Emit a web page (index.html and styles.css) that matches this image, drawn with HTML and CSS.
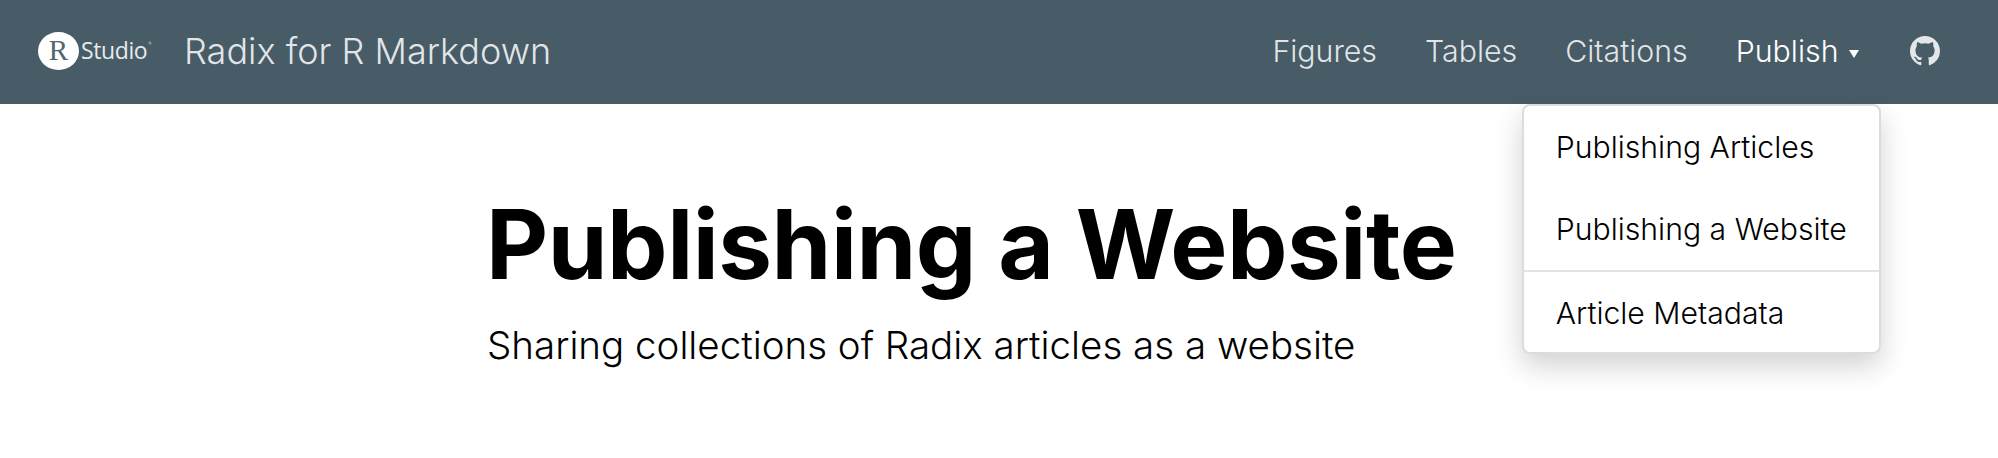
FILE: index.html
```html
<!DOCTYPE html>
<html>
<head>
  <meta charset="utf-8">
  <meta name="viewport" content="width=device-width">
  <title>Publishing a Website</title>
  <link rel="stylesheet" href="styles.css">
</head>
<body>
  <div class="navbar">
    <a class="logo" href="#">
      <svg width="116" height="44" viewBox="0 0 116 44">
        <ellipse cx="20.5" cy="22" rx="20.5" ry="19" fill="#fff"/>
        <text class="logo-r" x="20.5" y="31" text-anchor="middle">R</text>
        <text class="logo-studio" x="43" y="30">Studio</text>
        <circle cx="112" cy="14" r="1.2" fill="none" stroke="#cfd6da" stroke-width="0.5"/>
      </svg>
    </a>
    <a class="brand" href="#">Radix for R Markdown</a>
    <div class="nav-links">
      <a class="nav-link" href="#">Figures</a>
      <a class="nav-link" href="#">Tables</a>
      <a class="nav-link" href="#">Citations</a>
      <div class="nav-menu">
        <a class="nav-link active" href="#">Publish <span class="caret"></span></a>
        <div class="dropdown">
          <a class="dropdown-item" href="#">Publishing Articles</a>
          <a class="dropdown-item" href="#">Publishing a Website</a>
          <div class="divider"></div>
          <a class="dropdown-item" href="#">Article Metadata</a>
        </div>
      </div>
      <a class="nav-link github" href="#">
        <svg width="30" height="30" viewBox="0 0 16 16"><path fill="currentColor" d="M8 0C3.58 0 0 3.58 0 8c0 3.54 2.29 6.53 5.47 7.59.4.07.55-.17.55-.38 0-.19-.01-.82-.01-1.49-2.01.37-2.53-.49-2.69-.94-.09-.23-.48-.94-.82-1.13-.28-.15-.68-.52-.01-.53.63-.01 1.08.58 1.23.82.72 1.21 1.87.87 2.33.66.07-.52.28-.87.51-1.07-1.78-.2-3.64-.89-3.64-3.95 0-.87.31-1.59.82-2.15-.08-.2-.36-1.02.08-2.12 0 0 .67-.21 2.2.82.64-.18 1.32-.27 2-.27.68 0 1.36.09 2 .27 1.53-1.04 2.2-.82 2.2-.82.44 1.1.16 1.92.08 2.12.51.56.82 1.27.82 2.15 0 3.07-1.87 3.75-3.65 3.95.29.25.54.73.54 1.48 0 1.07-.01 1.93-.01 2.2 0 .21.15.46.55.38A8.013 8.013 0 0016 8c0-4.42-3.58-8-8-8z"/></svg>
      </a>
    </div>
  </div>
  <div class="header">
    <h1 class="title">Publishing a Website</h1>
    <p class="subtitle">Sharing collections of Radix articles as a website</p>
  </div>
</body>
</html>
```

FILE: styles.css
```css
*{
  padding: 0;
  margin: 0;
  box-sizing: border-box;
}
html, body{
  height: 100%;
  overflow: hidden;
}
body{
  font-family: Inter, "Liberation Sans", sans-serif;
  background-color: #fff;
  color: #000;
}
a{
  text-decoration: none;
  color: inherit;
}
.navbar{
  display: flex;
  align-items: center;
  height: 104px;
  padding: 0 38px 2px;
  background-color: #485c68;
  color: rgba(255,255,255,0.85);
}
.logo{
  display: flex;
  margin-right: 30px;
}
.logo-r{
  font-family: "Liberation Serif", serif;
  font-size: 29px;
  fill: #54666f;
}
.logo-studio{
  font-family: "Open Sans", sans-serif;
  font-size: 23px;
  fill: #e6eaec;
  letter-spacing: -0.4px;
}
.brand{
  font-size: 36px;
  font-weight: 300;
}
.nav-links{
  display: flex;
  align-items: center;
  gap: 48px;
  margin-left: auto;
  margin-right: 20px;
  font-size: 30.3px;
  font-weight: 300;
}
.nav-menu{
  position: relative;
}
.active{
  color: #fff;
}
.caret{
  display: inline-block;
  margin-left: 2px;
  vertical-align: middle;
  border-top: 8px solid #fff;
  border-left: 5px solid transparent;
  border-right: 5px solid transparent;
}
.github{
  display: flex;
  margin-left: 3px;
}
.dropdown{
  position: absolute;
  top: 71px;
  left: -214px;
  width: 359px;
  height: 250px;
  background-color: #fff;
  border: 2px solid #dcdcdc;
  border-radius: 8px;
  box-shadow: 0 12px 28px rgba(0,0,0,0.18);
  color: #000;
}
.dropdown-item{
  display: block;
  padding: 16px 32px;
  line-height: 50px;
  font-size: 30.2px;
  font-weight: 300;
  white-space: nowrap;
}
.divider{
  height: 2px;
  background-color: #e4e4e4;
}
.header{
  width: 1024px;
  margin: 0 auto;
  padding-top: 81px;
}
.title{
  margin-left: -1px;
  font-size: 96px;
  font-weight: 700;
  letter-spacing: -0.45px;
  line-height: 118px;
}
.subtitle{
  margin-top: 17px;
  font-size: 38.5px;
  font-weight: 300;
  line-height: 50px;
}
```
